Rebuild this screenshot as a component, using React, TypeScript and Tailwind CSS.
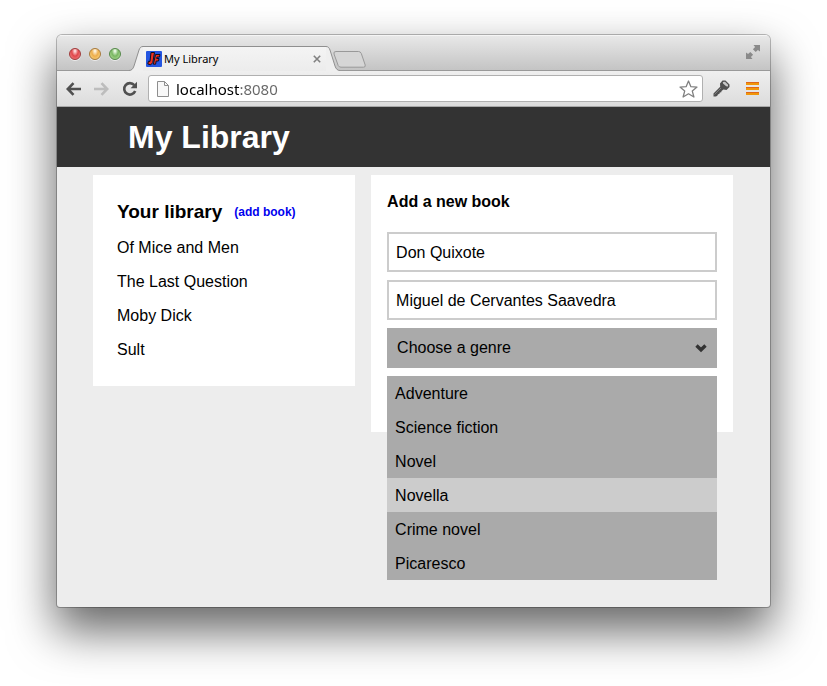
import { useState } from "react";

const books = ["Of Mice and Men", "The Last Question", "Moby Dick", "Sult"];
const genres = ["Adventure", "Science fiction", "Novel", "Novella", "Crime novel", "Picaresco"];

function TrafficLights() {
  const base = "size-3 rounded-full border shadow-[0_1px_0_rgba(255,255,255,0.6)]";
  return (
    <div className="flex gap-2 self-start pt-3">
      <button aria-label="Close window" className={base + " border-[#a03a3a] bg-[radial-gradient(ellipse_at_50%_20%,#fbd5d5_8%,#e0474b_45%,#f79090_100%)]"} />
      <button aria-label="Minimise window" className={base + " border-[#a87a3a] bg-[radial-gradient(ellipse_at_50%_20%,#fdf0d8_8%,#eeae4c_45%,#fddf8e_100%)]"} />
      <button aria-label="Zoom window" className={base + " border-[#548848] bg-[radial-gradient(ellipse_at_50%_20%,#e6f6df_8%,#79b762_45%,#bfe8a4_100%)]"} />
    </div>
  );
}

function Favicon() {
  return (
    <svg width="16" height="16" viewBox="0 0 16 16" aria-hidden="true">
      <rect width="16" height="16" rx="1" fill="#2455e0" />
      <path d="M5 1.500H8.500L6.800 11.500L4.800 13.800L1.800 13L2.500 10.200L4 10.500Z" fill="#f03020" stroke="#101020" />
      <path d="M9.500 3.500H14L13.500 6H11L10.700 7.500H13L12.500 10H10.200L9.600 13.200H7.400Z" fill="#f03020" stroke="#101020" />
    </svg>
  );
}

function TabStrip() {
  return (
    <div className="flex h-9 items-end border-t border-[#f5f5f5] bg-linear-to-b from-[#e8e8e8] to-[#c3c3c3] pl-3 shadow-[inset_0_-1px_0_#999]">
      <TrafficLights />
      <div className="ml-2 flex h-[25px]">
        <svg width="14" height="25" viewBox="0 0 14 25" className="shrink-0" aria-hidden="true">
          <path d="M0 24.500C2.500 24.500 4 23 5 20L10 4C11 1.500 12 0.500 14 0.500V25H0Z" fill="#efefef" />
          <path d="M0 24.500C2.500 24.500 4 23 5 20L10 4C11 1.500 12 0.500 14 0.500" fill="none" stroke="#8f8f8f" />
        </svg>
        <div className="flex w-[183px] items-center border-t border-[#8f8f8f] bg-linear-to-b from-[#f4f4f4] to-[#ececec] pl-[3px]">
          <Favicon />
          <span className="ml-0.5 flex-1 font-['Noto_Sans',sans-serif] text-[11px] leading-4 text-black">My Library</span>
          <button aria-label="Close tab" className="mr-[5px]">
            <svg width="8" height="8" viewBox="0 0 8 8" aria-hidden="true">
              <path d="M0.800 0.800L7.200 7.200M7.200 0.800L0.800 7.200" stroke="#808080" strokeWidth="1.600" />
            </svg>
          </button>
        </div>
        <svg width="14" height="25" viewBox="0 0 14 25" className="shrink-0" aria-hidden="true">
          <path d="M14 24.500C11.500 24.500 10 23 9 20L4 4C3 1.500 2 0.500 0 0.500V25H14Z" fill="#efefef" />
          <path d="M14 24.500C11.500 24.500 10 23 9 20L4 4C3 1.500 2 0.500 0 0.500" fill="none" stroke="#8f8f8f" />
        </svg>
      </div>
      <button aria-label="New tab" className="-ml-[7px] mb-[3px]">
        <svg width="33" height="17" viewBox="0 0 33 17" aria-hidden="true">
          <path d="M3 0.500H25.500Q27.500 0.500 28.300 2.500L32.200 14Q32.800 16.200 30.500 16.200H8Q6 16.200 5.200 14.500L1 3Q0.200 0.500 3 0.500Z" fill="#d6d6d6" stroke="#999" />
        </svg>
      </button>
      <button aria-label="Full screen" className="mr-2.5 mb-3 ml-auto">
        <svg width="14" height="14" viewBox="0 0 14 14" fill="#8a8a8a" aria-hidden="true">
          <path d="M7.500 0H14V6.500L11.900 4.900L9.700 7.100L6.900 4.300L9.100 2.100Z" />
          <path d="M0 7.500V14H6.500L4.900 11.900L7.100 9.700L4.300 6.900L2.100 9.100Z" />
        </svg>
      </button>
    </div>
  );
}

function Toolbar() {
  return (
    <div className="flex h-9 items-center border-b border-[#a8a8a8] bg-linear-to-b from-[#efefef] to-[#dcdcdc] pr-[11px] pl-[9px]">
      <button aria-label="Back">
        <svg width="15" height="14" viewBox="0 0 15 14" fill="none" stroke="#505050" strokeWidth="2.600" aria-hidden="true">
          <path d="M15 7H2M7.500 1.200L1.800 7L7.500 12.800" />
        </svg>
      </button>
      <button aria-label="Forward" className="ml-[13px]">
        <svg width="15" height="14" viewBox="0 0 15 14" fill="none" stroke="#bdbdbd" strokeWidth="2.600" aria-hidden="true">
          <path d="M0 7H13M7.500 1.200L13.200 7L7.500 12.800" />
        </svg>
      </button>
      <button aria-label="Reload" className="ml-[13px]">
        <svg width="16" height="16" viewBox="0 0 16 16" fill="none" aria-hidden="true">
          <path d="M12.300 4.200A5.700 5.700 0 1 0 13.200 10" stroke="#505050" strokeWidth="2.600" />
          <path d="M15 0.800V7.200H8.600Z" fill="#505050" />
        </svg>
      </button>
      <div className="ml-2.5 flex h-[27px] flex-1 items-center rounded-[3px] border border-[#b0b0b0] bg-white pr-1 pl-2">
        <svg width="12" height="16" viewBox="0 0 12 16" aria-hidden="true">
          <path d="M0.500 0.500H7.500L11.500 4.500V15.500H0.500Z" fill="#f8f8f8" stroke="#8e8e8e" />
          <path d="M7.500 0.500V4.500H11.500" fill="none" stroke="#8e8e8e" />
        </svg>
        <input
          aria-label="Address"
          defaultValue="localhost:8080"
          className="ml-[7px] min-w-0 flex-1 bg-[linear-gradient(to_right,#000_63px,#666_63px)] bg-clip-text font-['Noto_Sans',sans-serif] text-[15px] leading-5 text-transparent caret-black outline-none"
        />
        <button aria-label="Bookmark this page">
          <svg width="19" height="18" viewBox="0 0 19 18" aria-hidden="true">
            <path d="M9.500 1L11.900 6.700L18 7.100L13.300 11.100L14.900 17L9.500 13.800L4.100 17L5.700 11.100L1 7.100L7.100 6.700Z" fill="#fff" stroke="#808080" strokeWidth="1.300" strokeLinejoin="round" />
          </svg>
        </button>
      </div>
      <button aria-label="Passwords" className="ml-2.5">
        <svg width="17" height="17" viewBox="0 0 17 17" aria-hidden="true">
          <path d="M9.500 0.500H12.500L16.500 4.500V7L13.500 10L10.500 9.500L8.500 11L8.300 12.300L6.800 12.500L6.300 14L5 14.200L4.500 15.500L3 16.500H0.500V13.500L7.200 6.800L7 3.500Z" fill="#505050" />
          <path d="M9.800 2L12 1.800L15 4.800V6.500L13.200 6.300L10 3.500Z" fill="#c8c8c8" />
          <path d="M1.500 14.500L8 8" stroke="#8a8a8a" strokeWidth="0.800" />
        </svg>
      </button>
      <button aria-label="Menu" className="ml-4">
        <svg width="13" height="14" viewBox="0 0 13 14" aria-hidden="true">
          <path d="M0 1.500H13M0 6.500H13M0 11.500H13" stroke="#f0960a" strokeWidth="3" />
          <path d="M0 0.500H13M0 5.500H13M0 10.500H13" stroke="#e0661a" />
        </svg>
      </button>
    </div>
  );
}

function Library() {
  return (
    <section className="bg-white px-6 pt-[25px] pb-[19px]">
      <div className="mb-[7px] flex items-center gap-3 leading-6">
        <h2 className="text-[19px] font-bold">Your library</h2>
        <a href="#add" className="text-[12px] font-bold text-[#0000ee]">(add book)</a>
      </div>
      <ul>
        {books.map((book) => (
          <li key={book} className="leading-[34px]">{book}</li>
        ))}
      </ul>
    </section>
  );
}

function AddBook() {
  const [open, setOpen] = useState(true);
  const [genre, setGenre] = useState("");
  const [active, setActive] = useState("Novella");
  const field = "mb-2 block h-10 w-full border-2 border-[#ccc] bg-white px-[7px] pt-0.5 outline-none";
  return (
    <form id="add" className="bg-white px-4 pt-[17px] pb-16">
      <h3 className="mb-5 leading-5 font-bold">Add a new book</h3>
      <input aria-label="Title" defaultValue="Don Quixote" className={field} />
      <input aria-label="Author" defaultValue="Miguel de Cervantes Saavedra" className={field} />
      <div className="relative">
        <select
          aria-label="Genre"
          value={genre}
          onChange={(e) => setGenre(e.target.value)}
          onMouseDown={(e) => {
            e.preventDefault();
            setOpen(!open);
          }}
          className="block h-10 w-full appearance-none bg-[#aaa] px-2.5 outline-none"
        >
          <option value="">Choose a genre</option>
          {genres.map((g) => (
            <option key={g}>{g}</option>
          ))}
        </select>
        <svg width="12" height="9" viewBox="0 0 12 9" className="pointer-events-none absolute top-4 right-2.5" aria-hidden="true">
          <path d="M1.500 1.500L6 5.800L10.500 1.500" fill="none" stroke="#333" strokeWidth="3.400" />
        </svg>
        {open && (
          <ul className="absolute inset-x-0 top-full mt-2 bg-[#aaa]">
            {genres.map((g) => (
              <li key={g}>
                <button
                  type="button"
                  onMouseEnter={() => setActive(g)}
                  onClick={() => {
                    setGenre(g);
                    setOpen(false);
                  }}
                  className={"block w-full px-2 pt-0.5 text-left leading-8 " + (g === active ? "bg-[#ccc]" : "")}
                >
                  {g}
                </button>
              </li>
            ))}
          </ul>
        )}
      </div>
    </form>
  );
}

export default function App() {
  return (
    <div className="flex min-h-screen flex-col bg-white px-[57px] pt-[35px] pb-[79px] font-['Liberation_Sans',Arial,sans-serif] text-[16px] text-black">
      <div className="flex flex-1 flex-col overflow-hidden rounded-t-[5px] rounded-b-[3px] bg-[#ededed] shadow-[0_0_0_1px_rgba(0,0,0,0.25),0_22px_46px_2px_rgba(0,0,0,0.6)]">
        <TabStrip />
        <Toolbar />
        <header className="bg-[#333] px-[71px]">
          <h1 className="text-[32px] leading-[60px] font-bold text-white">My Library</h1>
        </header>
        <main className="grid grid-cols-[21fr_29fr] items-start gap-4 pt-2 pr-[37px] pl-9">
          <Library />
          <AddBook />
        </main>
      </div>
    </div>
  );
}
